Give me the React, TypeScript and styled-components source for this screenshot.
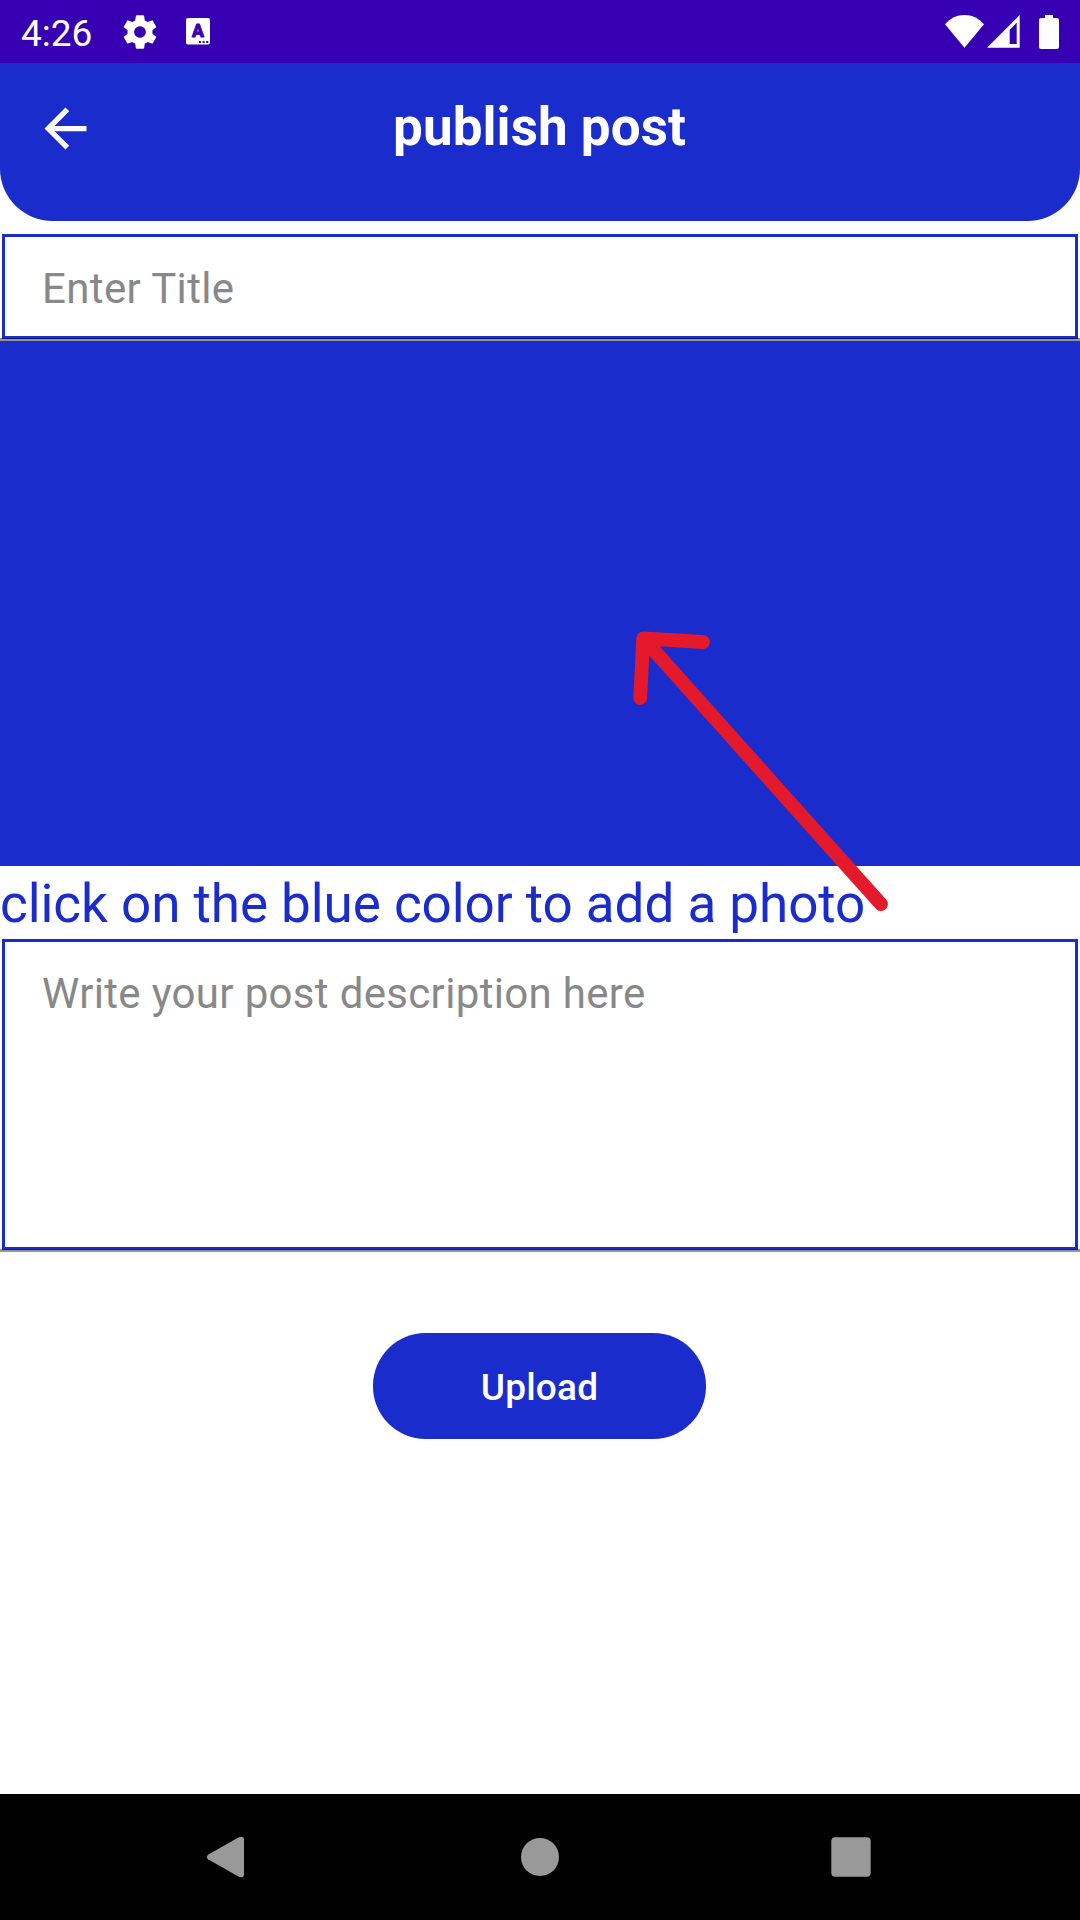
import React from "react";
import styled, { createGlobalStyle } from "styled-components";

const BLUE = "#1a2ccb";

const GlobalStyle = createGlobalStyle`
  *, *::before, *::after { box-sizing: border-box; }
  body { margin: 0; background: #fff; }
  body, input, textarea, button { font-family: Roboto, "Noto Sans", sans-serif; }
`;

const Screen = styled.div`
  display: flex;
  flex-direction: column;
  width: 1080px;
  height: 1920px;
  overflow: hidden;
  background: #fff;
`;

const StatusBar = styled.div`
  display: flex;
  align-items: center;
  justify-content: space-between;
  flex: none;
  height: 63px;
  padding: 0 21px 0 21px;
  background: #3700b3;
  color: #fff;
`;

const StatusGroup = styled.div`
  display: flex;
  align-items: center;
`;

const Clock = styled.span`
  width: 99px;
  padding-top: 3px;
  font-size: 37px;
  line-height: 43px;
`;

const Glyph = styled.svg<{ $gap?: number }>`
  display: block;
  flex: none;
  margin-left: ${(p) => p.$gap ?? 0}px;
`;

const IconLetter = styled.text`
  font-family: Roboto, sans-serif;
  font-size: 17.5px;
  font-weight: 900;
`;

const Header = styled.header`
  display: grid;
  grid-template-columns: 132px 1fr 132px;
  align-items: start;
  flex: none;
  height: 158px;
  border-radius: 0 0 52.5px 52.5px;
  background: ${BLUE};
  color: #fff;
`;

const BackButton = styled.button`
  display: flex;
  margin: 0;
  padding: 34px 0 0 33.5px;
  border: 0;
  background: none;
  color: inherit;
`;

const Title = styled.h1`
  margin: 0;
  padding: 33px 1px 0 0;
  text-align: center;
  font-size: 53px;
  font-weight: 700;
  line-height: 63px;
  letter-spacing: 0.05px;
  white-space: nowrap;
`;

const Form = styled.main`
  display: flex;
  flex-direction: column;
  flex: 1;
  padding-top: 13px;
`;

const Field = styled.label<{ $height: number }>`
  position: relative;
  display: flex;
  flex: none;
  height: ${(p) => p.$height}px;
  padding: 0 2px 2px;

  &::after {
    content: "";
    position: absolute;
    left: 0;
    right: 0;
    bottom: 0;
    height: 3px;
    background: rgba(0, 0, 0, 0.42);
  }
`;

const TextInput = styled.input`
  flex: 1;
  min-width: 0;
  border: 3px solid ${BLUE};
  border-radius: 0;
  padding: 4px 37px 0;
  outline: 0;
  background: #fff;
  font-size: 42px;
  letter-spacing: 0.37px;

  &::placeholder { color: #888; opacity: 1; }
`;

const TextArea = styled.textarea`
  flex: 1;
  min-width: 0;
  border: 3px solid ${BLUE};
  border-radius: 0;
  padding: 27px 37px 0;
  outline: 0;
  resize: none;
  background: #fff;
  font-size: 42px;
  line-height: 50px;
  letter-spacing: 0.33px;

  &::placeholder { color: #888; opacity: 1; }
`;

const PhotoPicker = styled.section`
  position: relative;
  flex: none;
  height: 525px;
  background: ${BLUE};
`;

const Pointer = styled.svg`
  position: absolute;
  left: 620px;
  top: 279px;
  overflow: visible;
`;

const Caption = styled.p`
  flex: none;
  height: 73px;
  margin: 0;
  padding-top: 7px;
  color: ${BLUE};
  font-size: 53px;
  line-height: 63px;
  letter-spacing: -0.05px;
  white-space: nowrap;
`;

const UploadButton = styled.button`
  align-self: center;
  width: 333px;
  height: 106px;
  margin: 81px 1px 0 0;
  padding: 3px 0 0;
  border: 0;
  border-radius: 52.5px;
  background: ${BLUE};
  color: #fff;
  font-size: 37px;
  font-weight: 500;
  letter-spacing: 0.2px;
`;

const NavBar = styled.nav`
  display: flex;
  align-items: center;
  flex: none;
  height: 126px;
  padding: 0 209px 0 206px;
  background: #000;
  color: #999;
`;

export default function App() {
  return (
    <>
      <GlobalStyle />
      <Screen>
        <StatusBar>
          <StatusGroup>
            <Clock>4:26</Clock>
            <Glyph width="40" height="40" viewBox="0 0 24 24" fill="currentColor">
              <path d="M19.43 12.98c.04-.32.07-.64.07-.98s-.03-.66-.07-.98l2.11-1.65c.19-.15.24-.42.12-.64l-2-3.46c-.12-.22-.39-.3-.61-.22l-2.49 1c-.52-.4-1.08-.73-1.69-.98l-.38-2.65C14.46 2.18 14.25 2 14 2h-4c-.25 0-.46.18-.49.42l-.38 2.65c-.61.25-1.17.59-1.69.98l-2.49-1c-.23-.09-.49 0-.61.22l-2 3.46c-.13.22-.07.49.12.64l2.11 1.65c-.04.32-.07.65-.07.98s.03.66.07.98l-2.11 1.65c-.19.15-.24.42-.12.64l2 3.46c.12.22.39.3.61.22l2.49-1c.52.4 1.08.73 1.69.98l.38 2.65c.03.24.24.42.49.42h4c.25 0 .46-.18.49-.42l.38-2.65c.61-.25 1.17-.59 1.69-.98l2.49 1c.23.09.49 0 .61-.22l2-3.46c.12-.22.07-.49-.12-.64l-2.11-1.65zM12 15.5c-1.93 0-3.5-1.57-3.5-3.5s1.57-3.5 3.5-3.5 3.5 1.57 3.5 3.5-1.57 3.5-3.5 3.5z" />
            </Glyph>
            <Glyph $gap={26} width="24" height="27" viewBox="0 0 24 27">
              <rect width="24" height="26.6" rx="2" fill="#fff" />
              <IconLetter x="12" y="19" textAnchor="middle" fill="#3700b3" stroke="#3700b3" strokeWidth="0.8" strokeLinejoin="round">A</IconLetter>
              <path d="M13 23h2v2h-2zM16.6 23h2v2h-2zM20.2 23h2v2h-2z" fill="#3700b3" />
            </Glyph>
          </StatusGroup>
          <StatusGroup>
            <Glyph width="39" height="33" viewBox="0 0 39 33" fill="currentColor">
              <path d="M0 9.3C5.2 3.2 12.2 0 19.5 0S33.8 3.2 39 9.3L19.5 32.8z" />
            </Glyph>
            <Glyph $gap={3} width="33" height="33" viewBox="0 0 33 33" fill="currentColor">
              <path fillRule="evenodd" d="M32.7 0v32.7H0zM22.7 14.7v14.3h7V7.7z" />
            </Glyph>
            <Glyph $gap={19} width="20" height="34" viewBox="0 0 20 34" fill="currentColor">
              <path d="M6 0h8v3h4a2 2 0 0 1 2 2v27a2 2 0 0 1-2 2H2a2 2 0 0 1-2-2V5a2 2 0 0 1 2-2h4z" />
            </Glyph>
          </StatusGroup>
        </StatusBar>

        <Header>
          <BackButton aria-label="Back">
            <Glyph width="63" height="63" viewBox="0 0 24 24" fill="currentColor">
              <path d="M20 11H7.83l5.59-5.59L12 4l-8 8 8 8 1.41-1.41L7.83 13H20v-2z" />
            </Glyph>
          </BackButton>
          <Title>publish post</Title>
        </Header>

        <Form>
          <Field $height={107}>
            <TextInput placeholder="Enter Title" />
          </Field>
          <PhotoPicker>
            <Pointer width="280" height="300" viewBox="620 620 280 300" fill="none" stroke="#e5192c" strokeWidth="13.8" strokeLinecap="round" strokeLinejoin="round">
              <path d="M703 642L643.2 638.4L640.2 698M643.2 638.4L881 904.2" />
            </Pointer>
          </PhotoPicker>
          <Caption>click on the blue color to add a photo</Caption>
          <Field $height={313}>
            <TextArea placeholder="Write your post description here" />
          </Field>
          <UploadButton>Upload</UploadButton>
        </Form>

        <NavBar>
          <Glyph width="39" height="42" viewBox="0 0 39 44" preserveAspectRatio="none" fill="currentColor">
            <path d="M2 19.6L32.8 1.4Q37.8-.8 38 4v36Q37.8 44.8 32.8 42.6L2 24.4Q-.2 22 2 19.6z" />
          </Glyph>
          <Glyph $gap={275} width="40" height="40" viewBox="0 0 40 40" fill="currentColor">
            <circle cx="20" cy="20" r="19" />
          </Glyph>
          <Glyph $gap={271} width="40" height="40" viewBox="0 0 40 40" fill="currentColor">
            <rect x="0.3" y="0.3" width="39.4" height="39.4" rx="4" />
          </Glyph>
        </NavBar>
      </Screen>
    </>
  );
}
